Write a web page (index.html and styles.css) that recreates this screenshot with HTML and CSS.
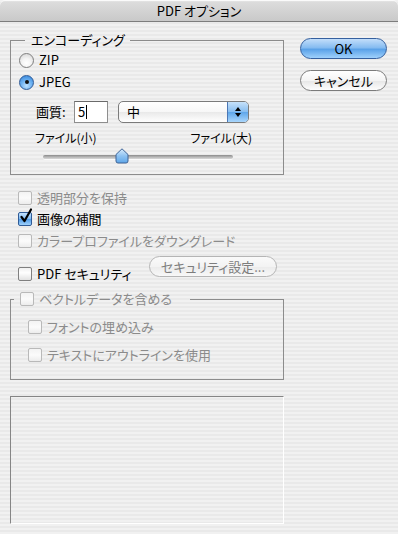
FILE: index.html
```html
<!DOCTYPE html>
<html lang="ja">
<head>
  <meta charset="UTF-8" />
  <title>PDF オプション</title>
  <link rel="stylesheet" href="styles.css">
</head>
<body>
<div class="window">
  <div class="titlebar">PDF オプション</div>

  <div class="content">
    <div class="left">

      <fieldset class="group encoding">
        <legend>エンコーディング</legend>
        <div class="group-body">
          <label class="radio zip"><span class="radio-mark"></span>ZIP</label>
          <label class="radio jpeg on"><span class="radio-mark"></span>JPEG</label>

          <div class="quality-row">
            <span class="quality-label">画質:</span>
            <span class="field">5<span class="caret"></span></span>
            <div class="popup">
              <span class="popup-value">中</span>
              <span class="popup-arrows">
                <svg width="8" height="12" viewBox="0 0 8 12">
                  <path d="M4 1 L7 5 L1 5 Z" fill="#000"/>
                  <path d="M4 11 L7 7 L1 7 Z" fill="#000"/>
                </svg>
              </span>
            </div>
          </div>

          <div class="size-labels">
            <span>ファイル(小)</span>
            <span>ファイル(大)</span>
          </div>

          <div class="slider">
            <div class="track"></div>
            <svg class="thumb" width="14" height="16" viewBox="0 0 14 16">
              <defs>
                <linearGradient id="thumbFill" x1="0" y1="0" x2="0" y2="1">
                  <stop offset="0" stop-color="#d9ecfc"/>
                  <stop offset="0.5" stop-color="#8fc3f2"/>
                  <stop offset="1" stop-color="#5ea6e8"/>
                </linearGradient>
              </defs>
              <path d="M7 0.8 L13 6.5 L13 13 Q13 15 11 15 L3 15 Q1 15 1 13 L1 6.5 Z" fill="url(#thumbFill)" stroke="#3e6396" stroke-width="1"/>
            </svg>
          </div>
        </div>
      </fieldset>

      <div class="options">
        <label class="check disabled"><span class="check-box"></span>透明部分を保持</label>
        <label class="check checked">
          <span class="check-box">
            <svg class="tick" width="14" height="16" viewBox="0 0 14 16">
              <path d="M2.5 9 L5.5 13 L12 1.5" fill="none" stroke="#000" stroke-width="2.2" stroke-linecap="round" stroke-linejoin="round"/>
            </svg>
          </span>画像の補間</label>
        <label class="check disabled"><span class="check-box"></span>カラープロファイルをダウングレード</label>
        <div class="security-row">
          <label class="check"><span class="check-box"></span>PDF セキュリティ</label>
          <button class="pill small" disabled>セキュリティ設定...</button>
        </div>
      </div>

      <fieldset class="group vector">
        <legend><label class="check disabled"><span class="check-box"></span>ベクトルデータを含める</label></legend>
        <div class="group-body">
          <label class="check disabled"><span class="check-box"></span>フォントの埋め込み</label>
          <label class="check disabled"><span class="check-box"></span>テキストにアウトラインを使用</label>
        </div>
      </fieldset>

      <div class="preview"></div>
    </div>

    <div class="buttons">
      <button class="pill default">OK</button>
      <button class="pill">キャンセル</button>
    </div>
  </div>
</div>
</body>
</html>
```

FILE: styles.css
```css
body {
  margin: 0;
  background: #ececec;
  font-family: "Noto Sans CJK JP", "Liberation Sans", sans-serif;
  font-size: 13px;
  line-height: 16px;
  color: #000;
  font-feature-settings: "palt";
}
.window {
  width: 398px;
  height: 534px;
  overflow: hidden;
  background: repeating-linear-gradient(to bottom, #f1f1f1 0, #f1f1f1 2px, #e9e9e9 2px, #e9e9e9 4px);
}
.titlebar {
  height: 21px;
  line-height: 22px;
  text-align: center;
  border-bottom: 1px solid #7d7d7d;
  border-radius: 5px 5px 0 0;
  background: linear-gradient(to bottom, #f2f2f2 0, #dcdcdc 2px, #c9c9c9 100%);
  box-shadow: inset 0 1px 0 #fafafa;
}
.content {
  display: flex;
  padding: 10px 0 0 10px;
}
.left {
  width: 274px;
}
.buttons {
  margin-left: 16px;
  padding-top: 6px;
  display: flex;
  flex-direction: column;
  gap: 11px;
  width: 88px;
}

/* group boxes */
.group {
  margin: 0;
  padding: 0;
  border: 1px solid #8c8c8c;
  min-width: 0;
}
.group legend {
  padding: 0;
  line-height: 16px;
}
.encoding legend {
  margin-left: 14px;
  padding: 0 5px 0 6px;
}
.encoding .group-body {
  padding: 0 0 8px 8px;
}

.radio {
  display: flex;
  align-items: center;
  height: 16px;
  margin-top: 4px;
}
.radio.jpeg {
  margin-top: 6px;
}
.radio-mark {
  width: 13px;
  height: 13px;
  border-radius: 50%;
  border: 1px solid #7f7f7f;
  background: radial-gradient(circle at 50% 70%, #ffffff 0, #f4f4f4 40%, #cfcfcf 100%);
  margin-right: 5px;
  display: flex;
  align-items: center;
  justify-content: center;
}
.radio.on .radio-mark {
  border-color: #2f5b97;
  background: radial-gradient(circle at 50% 75%, #bfe2ff 0, #6fb3f2 45%, #2d7fd6 100%);
}
.radio.on .radio-mark::after {
  content: "";
  width: 4px;
  height: 4px;
  border-radius: 50%;
  background: #111;
}

.quality-row {
  display: flex;
  align-items: center;
  margin-top: 10px;
  height: 23px;
  padding-left: 17px;
}
.quality-label {
  width: 38px;
}
.field {
  width: 34px;
  height: 22px;
  box-sizing: border-box;
  border: 1px solid #8e8e8e;
  border-top-color: #6a6a6a;
  background: #fff;
  padding-left: 3px;
  display: flex;
  align-items: center;
}
.caret {
  width: 1px;
  height: 14px;
  background: #000;
  margin-left: 1px;
}
.popup {
  margin-left: 10px;
  width: 131px;
  height: 22px;
  box-sizing: border-box;
  border: 1px solid #7b7b7b;
  border-radius: 5px;
  background: linear-gradient(to bottom, #ffffff 0, #f7f7f7 50%, #e9e9e9 51%, #ffffff 100%);
  display: flex;
  overflow: hidden;
}
.popup-value {
  flex: 1;
  padding-left: 8px;
  line-height: 20px;
}
.popup-arrows {
  width: 20px;
  display: flex;
  align-items: center;
  justify-content: center;
  border-left: 1px solid #4c77b5;
  background: linear-gradient(to bottom, #c6e1fa 0, #86bdf0 50%, #5ea6ea 51%, #a9d6fc 100%);
}

.size-labels {
  display: flex;
  justify-content: space-between;
  margin-top: 7px;
  padding: 0 31px 0 16px;
  font-size: 12px;
}

.slider {
  position: relative;
  height: 11px;
  padding-top: 7px;
  margin-top: 2px;
  margin-left: 24px;
  width: 190px;
}
.track {
  height: 4px;
  border-radius: 2px;
  background: linear-gradient(to bottom, #8a8a8a 0, #b5b5b5 50%, #d8d8d8 100%);
  box-shadow: 0 1px 0 #fbfbfb;
}
.thumb {
  position: absolute;
  left: 72px;
  top: 0;
}

/* checkboxes */
.check {
  display: flex;
  align-items: center;
  height: 16px;
}
.check-box {
  position: relative;
  width: 12px;
  height: 12px;
  border: 1px solid #7f7f7f;
  border-radius: 2px;
  background: linear-gradient(to bottom, #f0f0f0 0, #ffffff 40%, #e2e2e2 100%);
  margin-right: 5px;
  flex: none;
}
.check.disabled {
  color: #8b8b8b;
}
.check.disabled .check-box {
  border-color: #b9b9b9;
  background: linear-gradient(to bottom, #f3f3f3 0, #fbfbfb 50%, #ececec 100%);
}
.check.checked .check-box {
  border-color: #2f5b97;
  background: linear-gradient(to bottom, #c5e3fd 0, #7fbaf2 50%, #4f9ae6 51%, #9fd1fb 100%);
}
.tick {
  position: absolute;
  left: 0;
  top: -5px;
}

.options {
  padding-left: 8px;
}
.options .check:nth-child(1) { margin-top: 15px; }
.options .check:nth-child(2) { margin-top: 5px; }
.options .check:nth-child(3) { margin-top: 6px; }
.security-row {
  display: flex;
  align-items: center;
  margin-top: 7px;
  height: 21px;
}
.security-row .check {
  width: 131px;
}

/* buttons */
.pill {
  font: inherit;
  font-feature-settings: "palt";
  height: 21px;
  padding: 0;
  border: 1px solid #7b7b7b;
  border-radius: 11px;
  background: linear-gradient(to bottom, #ffffff 0, #f4f4f4 50%, #e6e6e6 51%, #fdfdfd 100%);
  color: #000;
  line-height: 19px;
}
.pill.default {
  border-color: #35609f;
  background: linear-gradient(to bottom, #c3defa 0, #86bcf1 45%, #5ba2e8 55%, #9fd1fc 100%);
}
.buttons .pill {
  width: 87px;
}
.pill.small {
  width: 128px;
  border-color: #b5b5b5;
  color: #7d7d7d;
  background: linear-gradient(to bottom, #fafafa 0, #f3f3f3 50%, #ebebeb 51%, #f8f8f8 100%);
}

.vector {
  margin-top: 14px;
}
.vector legend {
  margin-left: 3px;
  padding: 0 18px 0 6px;
}
.vector .group-body {
  padding: 12px 0 16px 17px;
  display: flex;
  flex-direction: column;
  gap: 12px;
}

.preview {
  margin-top: 16px;
  height: 126px;
  border: 1px solid #fff;
  border-top-color: #858585;
  border-left-color: #858585;
}
```
